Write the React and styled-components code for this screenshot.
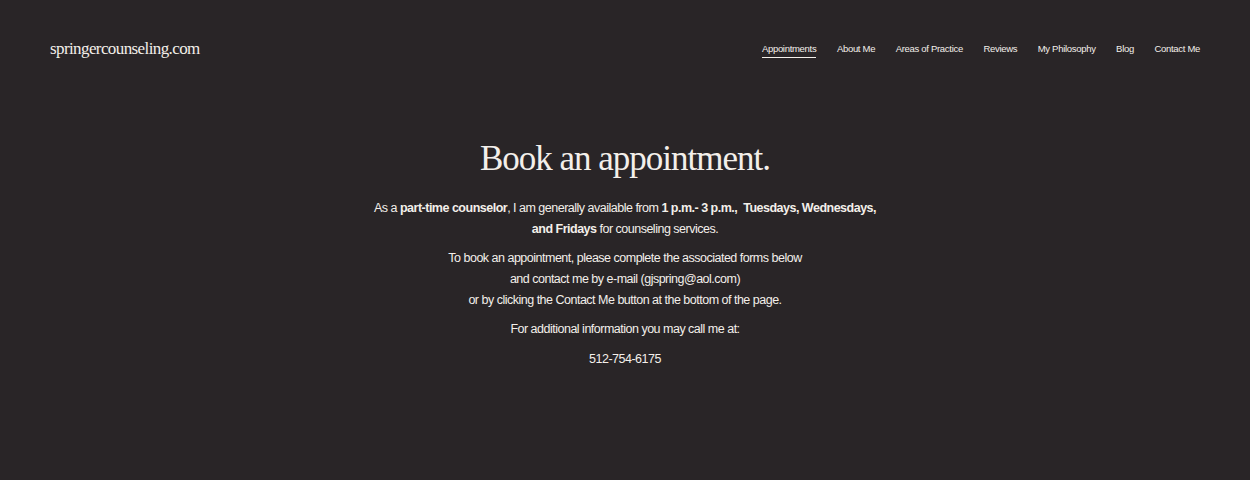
import React from "react";
import styled, { createGlobalStyle } from "styled-components";

const Global = createGlobalStyle`
  html, body { margin: 0; padding: 0; background: #292527; }
  body { min-height: 480px; -webkit-font-smoothing: antialiased; }
`;

const Page = styled.div`
  min-height: 480px;
  background: #292527;
  color: #f3efea;
`;

const Header = styled.header`
  display: flex;
  align-items: center;
  justify-content: space-between;
  height: 24px;
  padding: 37px 50px 0;
`;

const Logo = styled.a`
  font-family: "Liberation Serif", "Times New Roman", serif;
  font-size: 17px;
  letter-spacing: -0.6px;
  color: #f3efea;
  text-decoration: none;
  line-height: 24px;
`;

const Nav = styled.nav`
  display: flex;
  align-items: center;
  gap: 20.5px;
`;

const NavLink = styled.a`
  position: relative;
  font-family: "Liberation Sans", Arial, sans-serif;
  font-size: 9.5px;
  letter-spacing: -0.3px;
  color: #f3efea;
  text-decoration: none;
  line-height: 14px;
  ${(p) =>
    p.$active &&
    `
    &::after {
      content: "";
      position: absolute;
      left: 0;
      right: 0;
      bottom: -2px;
      height: 1px;
      background: #f3efea;
    }
  `}
`;

const Main = styled.main`
  display: flex;
  flex-direction: column;
  align-items: center;
  text-align: center;
  padding-top: 77px;
`;

const Title = styled.h1`
  margin: 0 0 18px;
  font-family: "Liberation Serif", "Times New Roman", serif;
  font-weight: 400;
  font-size: 35px;
  line-height: 42px;
  letter-spacing: -1px;
  color: #f3efea;
`;

const Para = styled.p`
  margin: 0 0 8px;
  font-family: "Liberation Sans", Arial, sans-serif;
  font-size: 12.5px;
  line-height: 21px;
  letter-spacing: -0.5px;
  color: #f3efea;
  b {
    font-weight: 700;
  }
`;

const Phone = styled(Para)`
  margin-top: 1px;
`;

const navItems = [
  "Appointments",
  "About Me",
  "Areas of Practice",
  "Reviews",
  "My Philosophy",
  "Blog",
  "Contact Me",
];

export default function App() {
  return (
    <Page>
      <Global />
      <Header>
        <Logo href="#">springercounseling.com</Logo>
        <Nav>
          {navItems.map((n, i) => (
            <NavLink key={n} href="#" $active={i === 0}>
              {n}
            </NavLink>
          ))}
        </Nav>
      </Header>
      <Main>
        <Title>Book an appointment.</Title>
        <Para>
          As a <b>part-time counselor</b>, I am generally available from{" "}
          <b>1 p.m.- 3 p.m.,&nbsp; Tuesdays, Wednesdays,</b>
          <br />
          <b>and Fridays</b> for counseling services.
        </Para>
        <Para>
          To book an appointment, please complete the associated forms below
          <br />
          and contact me by e-mail (gjspring@aol.com)
          <br />
          or by clicking the Contact Me button at the bottom of the page.
        </Para>
        <Para>For additional information you may call me at:</Para>
        <Phone>512-754-6175</Phone>
      </Main>
    </Page>
  );
}
